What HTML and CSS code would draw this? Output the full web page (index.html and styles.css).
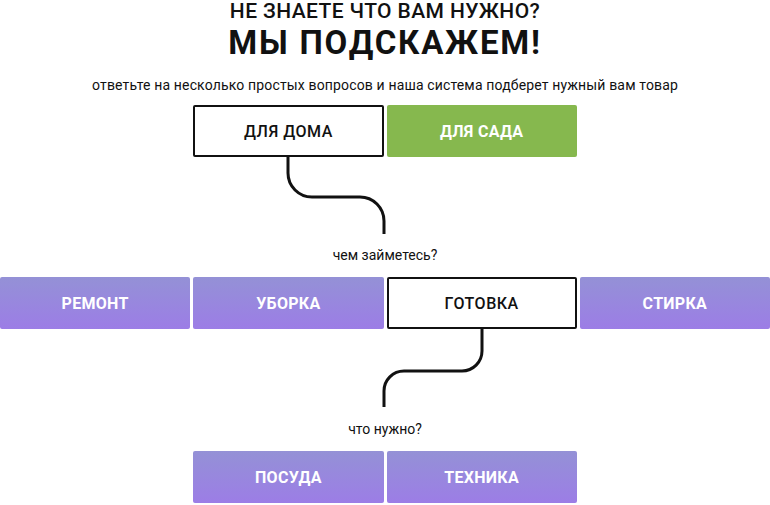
FILE: index.html
```html
<!DOCTYPE html>
<html lang="ru">
<head>
    <meta charset="UTF-8">
    <meta name="viewport" content="width=device-width, initial-scale=1.0">
    <title>Подбор товара</title>
    <link rel="stylesheet" href="styles.css">
</head>
<body>
    <div id="quiz">
        <h1 class="title">
            <span class="title-top">НЕ ЗНАЕТЕ ЧТО ВАМ НУЖНО?</span>
            <span class="title-main">МЫ ПОДСКАЖЕМ!</span>
        </h1>
        <p class="lead">ответьте на несколько простых вопросов и наша система подберет нужный вам товар</p>

        <div class="row">
            <button class="opt active first">ДЛЯ ДОМА</button>
            <button class="opt green">ДЛЯ САДА</button>
        </div>

        <svg class="link" width="770" height="77" viewBox="0 0 770 77">
            <path d="M288 0 V16 A24 24 0 0 0 312 40 H360 A24 24 0 0 1 384 64 V77" />
        </svg>
        <div class="question">чем займетесь?</div>

        <div class="row">
            <button class="opt">РЕМОНТ</button>
            <button class="opt">УБОРКА</button>
            <button class="opt active">ГОТОВКА</button>
            <button class="opt">СТИРКА</button>
        </div>

        <svg class="link" width="770" height="78" viewBox="0 0 770 78">
            <path d="M482 0 V22 A20 20 0 0 1 462 42 H404 A20 20 0 0 0 384 62 V78" />
        </svg>
        <div class="question q2">что нужно?</div>

        <div class="row">
            <button class="opt first">ПОСУДА</button>
            <button class="opt">ТЕХНИКА</button>
        </div>
    </div>
</body>
</html>
```

FILE: styles.css
```css
body {
    margin: 0;
    background-color: white;
    font-family: Roboto, "Liberation Sans", sans-serif;
    color: #111;
}
#quiz {
    width: 770px;
}
.title {
    margin: 0;
    text-align: center;
}
.title-top {
    display: block;
    font-size: 21px;
    line-height: 23px;
    font-weight: 500;
    letter-spacing: 0.4px;
}
.title-main {
    display: block;
    font-size: 33px;
    line-height: 39px;
    font-weight: 700;
    letter-spacing: 1.8px;
}
.lead {
    margin: 15px 0 12px;
    font-size: 14px;
    line-height: 16px;
    letter-spacing: 0.15px;
    text-align: center;
}
.row {
    display: grid;
    grid-template-columns: repeat(4, 1fr);
    gap: 3px;
}
.opt {
    height: 52px;
    border: none;
    border-radius: 2px;
    background: linear-gradient(to bottom, #9491d6, #9c7de6);
    color: white;
    font-family: inherit;
    font-size: 16px;
    font-weight: 700;
    letter-spacing: 0.3px;
    cursor: pointer;
}
.opt.first {
    grid-column-start: 2;
}
.opt.green {
    background: #86b84e;
}
.opt.active {
    background: white;
    color: #111;
    border: 2px solid #111;
    font-weight: 500;
    letter-spacing: 0.5px;
}
.link {
    display: block;
}
.link path {
    fill: none;
    stroke: #111;
    stroke-width: 3;
}
.question {
    height: 43px;
    line-height: 43px;
    font-size: 14px;
    text-align: center;
}
.question.q2 {
    height: 44px;
    line-height: 44px;
}
```
